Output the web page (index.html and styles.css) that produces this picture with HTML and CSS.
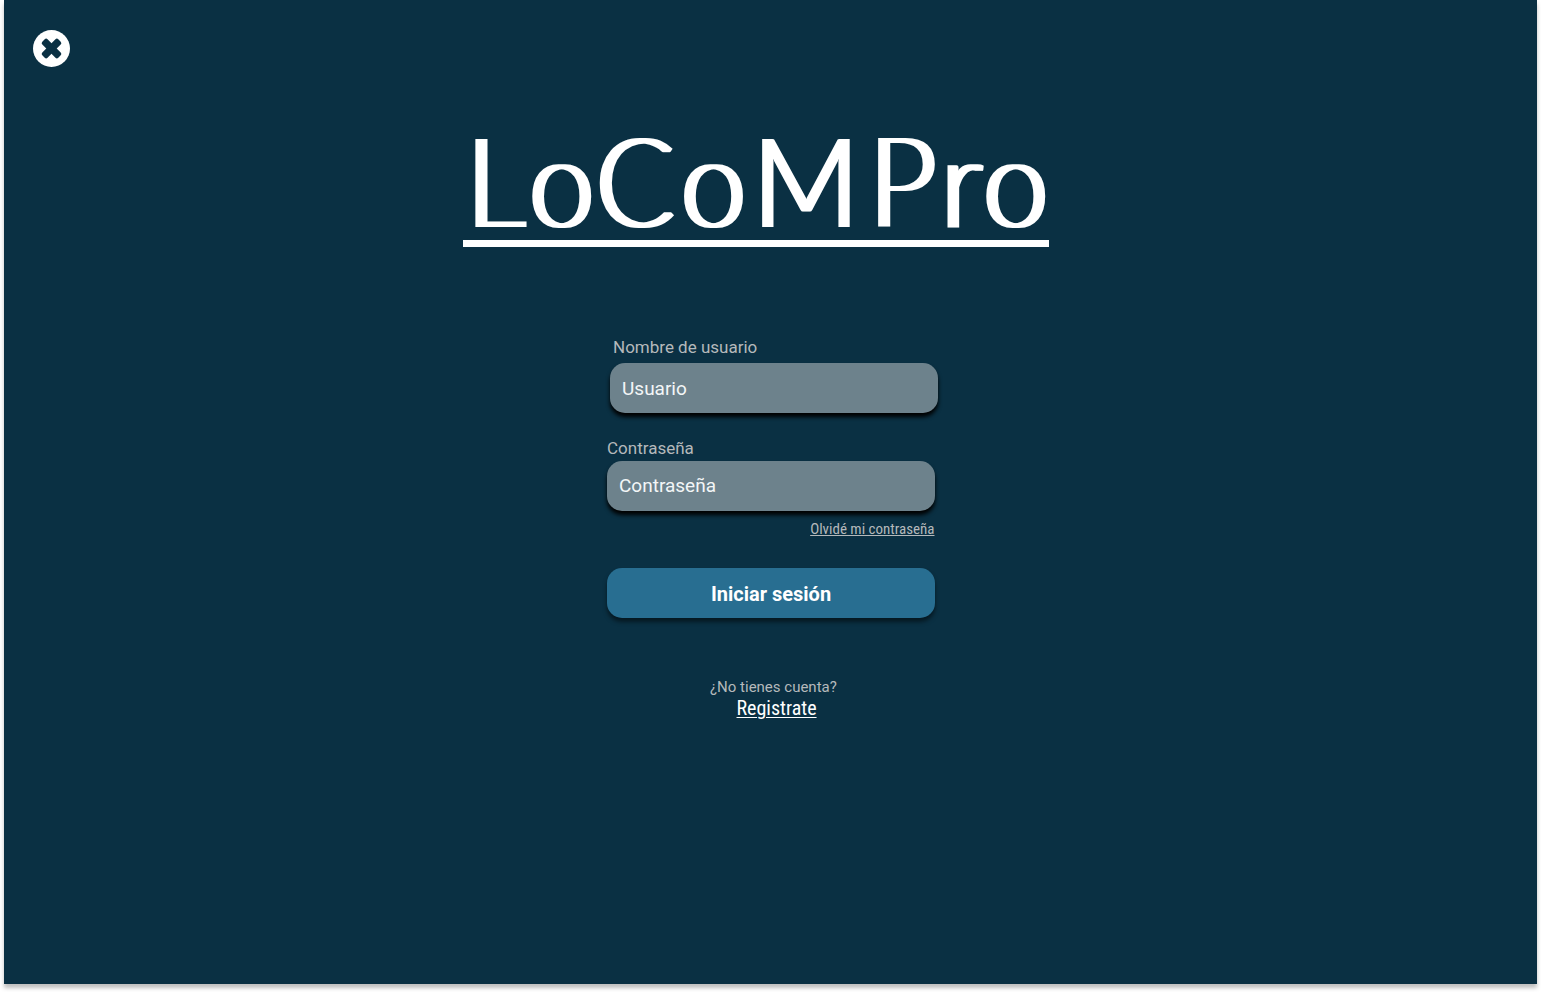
FILE: index.html
```html
<!DOCTYPE html>
<html lang="es">
<head>
<meta charset="utf-8">
<title>LoCoMPro</title>
<link rel="stylesheet" href="styles.css">
</head>
<body>
<main class="screen">
  <button class="close" aria-label="Cerrar">
    <svg viewBox="0 0 37 37" width="37" height="37"><circle cx="18.5" cy="18.5" r="18.5" fill="#fff"/><g transform="rotate(45 18.5 18.5)" fill="#0a3043"><rect x="7.2" y="14.8" width="22.6" height="7.4" rx="2"/><rect x="14.8" y="7.2" width="7.4" height="22.6" rx="2"/></g></svg>
  </button>
  <h1 class="brand">
    <svg class="brand-svg" viewBox="0 0 586 130" width="586" height="130">
      <filter id="broad" x="-5%" y="-10%" width="110%" height="120%" color-interpolation-filters="sRGB"><feMorphology operator="dilate" radius="3 0"/></filter>
      <g filter="url(#broad)"><text class="brand-text" transform="scale(.94 1)" y="107" x="3.5 70.5 141.5 232 308.5 432 508.5 553.5">LoCoMPro</text></g>
    </svg>
  </h1>
  <form class="login">
    <div class="field user">
      <label class="label" for="u"><span>Nombre de usuario</span></label>
      <input class="input" id="u" placeholder="Usuario">
    </div>
    <div class="field pass">
      <label class="label" for="p"><span>Contraseña</span></label>
      <input class="input" id="p" placeholder="Contraseña">
    </div>
    <a class="forgot">Olvidé mi contraseña</a>
    <button class="submit" type="button">Iniciar sesión</button>
    <p class="question">¿No tienes cuenta?</p>
    <a class="register">Registrate</a>
  </form>
</main>
</body>
</html>
```
FILE: styles.css
```css
* { box-sizing: border-box; }
body { margin: 0; background: #fff; font-family: Roboto, sans-serif; height: 992px; overflow: hidden; }
.screen { display: flow-root; width: 1533px; height: 984px; margin: 0 4px; background: #0a3043; box-shadow: 0 4px 4px rgba(0,0,0,.25); }
.close { display: block; width: 37px; height: 37px; margin: 30px 0 0 29px; padding: 0; border: 0; background: none; }
.close svg, .brand-svg { display: block; }
.brand { width: 586px; height: 127px; margin: 53px 0 0 459px; border-bottom: 7px solid #fff; }
.brand-svg { overflow: visible; }
.brand-text { font: 300 124px Lato, sans-serif; fill: #fff; }
.login { display: flex; flex-direction: column; width: 328px; margin: 88px 0 0 603px; }
.field { display: flex; flex-direction: column; }
.user { margin-left: 3px; width: 328px; }
.pass { margin-top: 25px; }
.label { height: 28px; padding-left: 3px; font-size: 17px; line-height: 24px; color: #b5b9bb; }
.pass .label { height: 23px; padding-left: 0; line-height: 20px; }
.input { width: 328px; height: 50px; padding: 1px 12px 0; border: 0; border-radius: 15px; background: #6d828c; font: 400 19px Roboto, sans-serif; color: #fff; box-shadow: 0 4px 4px #000; }
.pass .input { padding: 0 12px 2px; }
.input::placeholder { color: #f3f6f7; opacity: 1; }
.forgot { align-self: flex-end; margin: 9px .5px 0 0; font: 400 15px/18px "Roboto Condensed", Roboto, sans-serif; font-stretch: 75%; color: #b5b9bb; text-decoration: underline; }
.submit { height: 50px; margin-top: 30px; padding: 2px 0 0; border: 0; border-radius: 15px; background: #286e91; color: #fff; font: 700 20px Roboto, sans-serif; box-shadow: 0 4px 4px rgba(0,0,0,.5); }
.question { margin: 59px 0 0 103px; font-size: 15px; line-height: 20px; color: #b5b9bb; }
.register { align-self: flex-start; margin-left: 129.5px; font: 400 20px/23px "Roboto Condensed", Roboto, sans-serif; font-stretch: 75%; color: #fff; text-decoration: underline 1px; text-underline-offset: 2px; }
```
